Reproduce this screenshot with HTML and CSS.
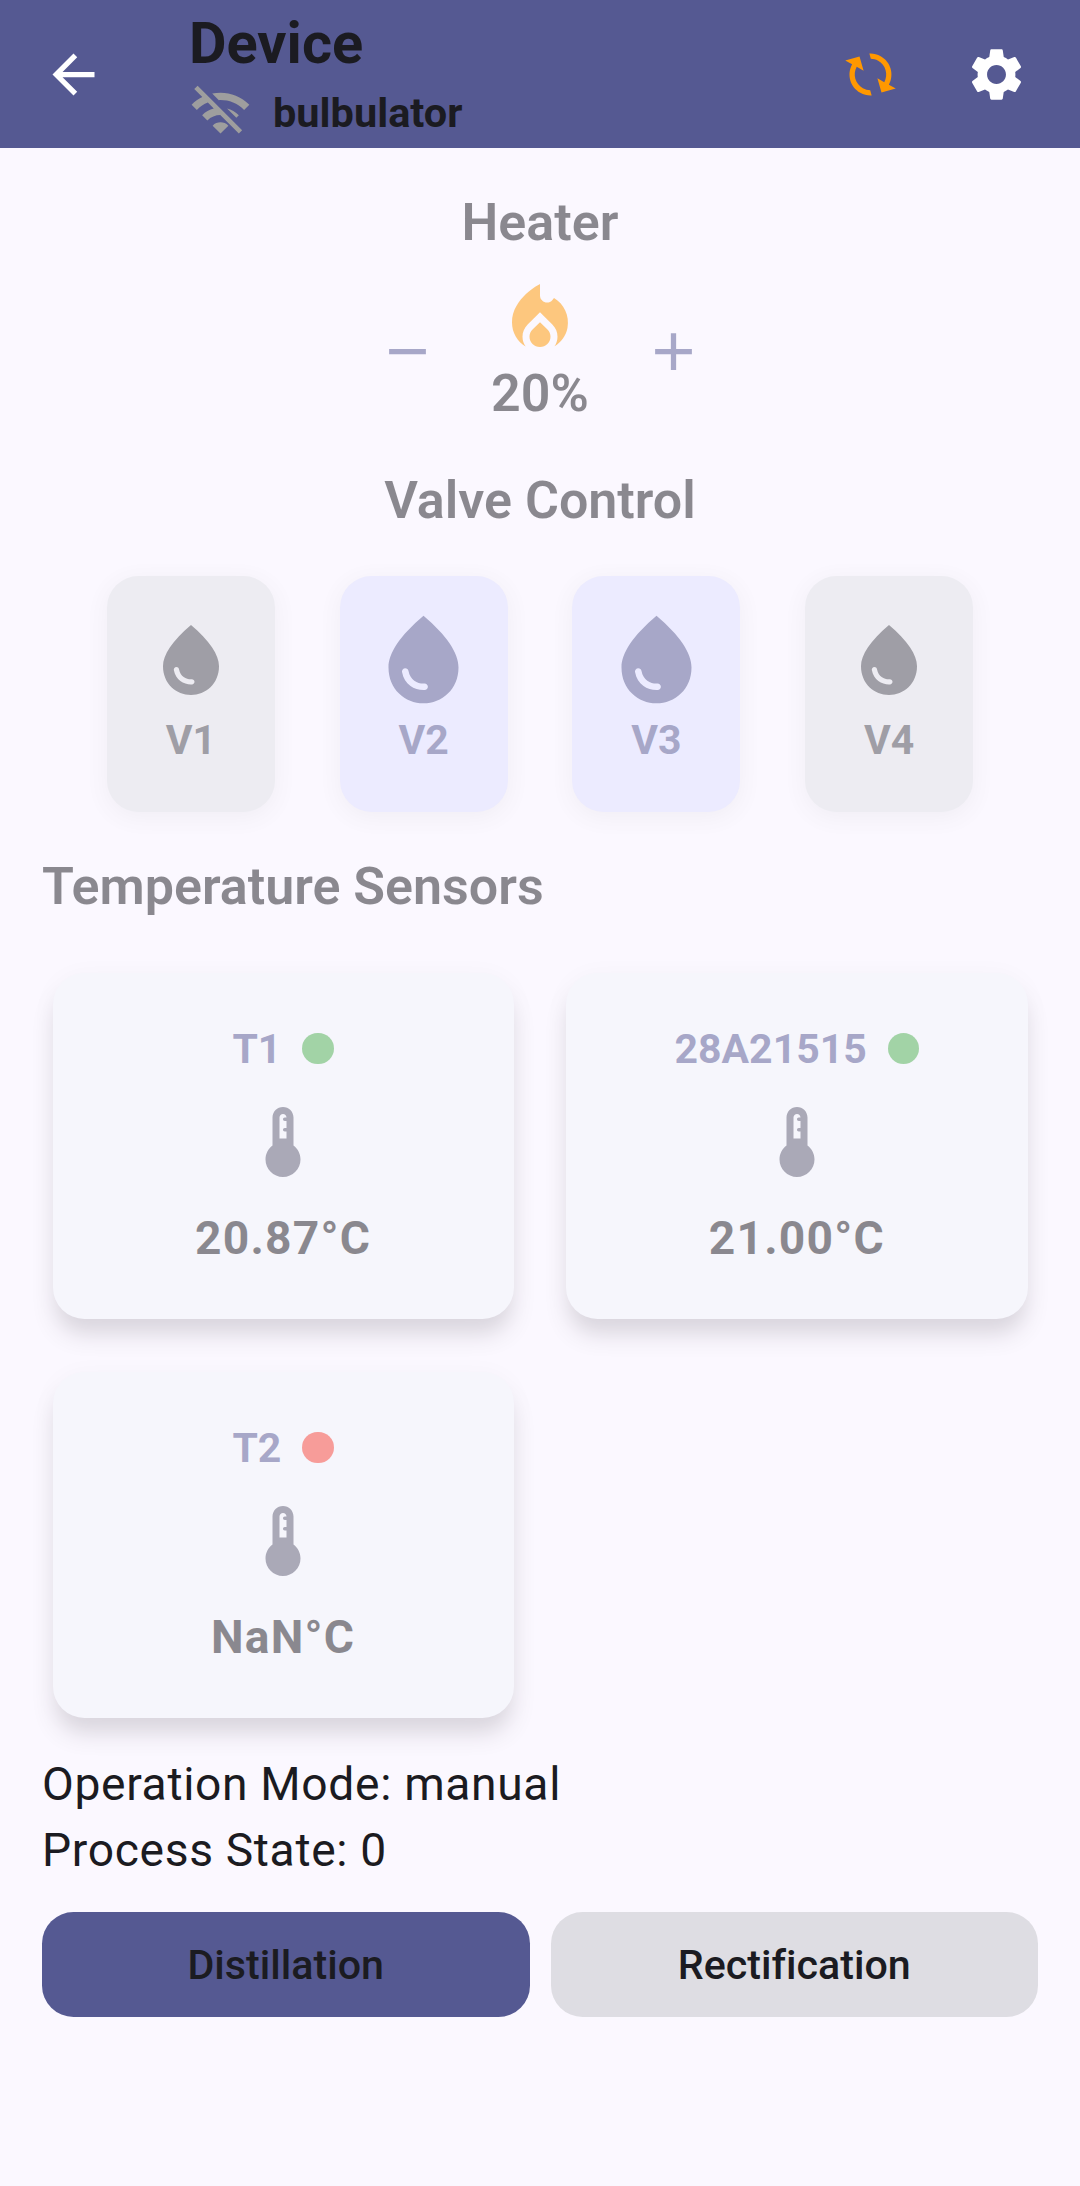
FILE: index.html
```html
<!DOCTYPE html>
<html lang="en">
<head>
<meta charset="utf-8">
<title>Device</title>
<link rel="stylesheet" href="styles.css">
</head>
<body>
<svg class="sprite" aria-hidden="true">
  <symbol id="drop" viewBox="0 0 24 24"><path d="M12 2c-5.33 4.55-8 8.48-8 11.8 0 4.98 3.8 8.2 8 8.2s8-3.22 8-8.2c0-3.32-2.67-7.25-8-11.8zM7.83 14c.37 0 .67.26.74.62.41 2.22 2.28 2.98 3.64 2.87.43-.02.79.32.79.75 0 .4-.32.73-.72.75-2.13.13-4.62-1.09-5.19-4.12-.08-.45.28-.87.74-.87z"/></symbol>
  <symbol id="thermometer" viewBox="0 0 24 24"><path d="M15 13V5c0-1.66-1.34-3-3-3S9 3.34 9 5v8c-1.21.91-2 2.37-2 4 0 2.76 2.24 5 5 5s5-2.24 5-5c0-1.63-.79-3.09-2-4zm-4-2V5c0-.55.45-1 1-1s1 .45 1 1h-.5c-.28 0-.5.22-.5.5s.22.5.5.5h.5v2h-.5c-.28 0-.5.22-.5.5s.22.5.5.5h.5v2h-2z"/></symbol>
</svg>

<header class="app-bar">
  <button class="icon-button" aria-label="Back">
    <svg class="icon" viewBox="0 0 24 24"><path d="M20 11H7.83l5.59-5.59L12 4l-8 8 8 8 1.41-1.41L7.83 13H20v-2z"/></svg>
  </button>
  <div class="heading">
    <h1 class="title">Device</h1>
    <div class="connection">
      <svg class="icon icon-offline" viewBox="0 0 24 24"><path d="M22.99 9C19.15 5.16 13.8 3.76 8.84 4.78l2.52 2.52c3.47-.17 6.99 1.05 9.63 3.7l2-2zm-4 4c-1.29-1.29-2.84-2.13-4.49-2.56l3.53 3.53.96-.97zM2 3.05L5.07 6.1C3.6 6.82 2.22 7.78 1 9l1.99 2c1.24-1.24 2.67-2.16 4.2-2.77l2.24 2.24C7.81 10.89 6.27 11.73 5 13v.01L6.99 15c1.36-1.36 3.14-2.04 4.92-2.06L18.98 20l1.27-1.26L3.29 1.79 2 3.05zM9 17l3 3 3-3c-1.65-1.66-4.34-1.66-6 0z"/></svg>
      <span class="name">bulbulator</span>
    </div>
  </div>
  <div class="actions">
    <button class="icon-button" aria-label="Sync">
      <svg class="icon icon-sync" viewBox="0 0 24 24"><path transform="rotate(119 12 12) translate(24 0) scale(-1 1)" d="M12 4V1L8 5l4 4V6c3.31 0 6 2.69 6 6 0 1.01-.25 1.97-.7 2.8l1.46 1.46C19.54 15.03 20 13.57 20 12c0-4.42-3.58-8-8-8zm0 14c-3.31 0-6-2.69-6-6 0-1.01.25-1.97.7-2.8L5.24 7.74C4.46 8.97 4 10.43 4 12c0 4.42 3.58 8 8 8v3l4-4-4-4v3z"/></svg>
    </button>
    <button class="icon-button" aria-label="Settings">
      <svg class="icon" viewBox="0 0 24 24"><path d="M19.14 12.94c.04-.3.06-.61.06-.94 0-.32-.02-.64-.07-.94l2.03-1.58c.18-.14.23-.41.12-.61l-1.92-3.32c-.12-.22-.37-.29-.59-.22l-2.39.96c-.5-.38-1.03-.7-1.62-.94L14.4 2.81c-.04-.24-.24-.41-.48-.41h-3.84c-.24 0-.43.17-.47.41L9.25 5.35c-.59.24-1.13.57-1.62.94l-2.39-.96c-.22-.08-.47 0-.59.22L2.74 8.87c-.12.21-.08.47.12.61l2.03 1.58c-.05.3-.09.63-.09.94s.02.64.07.94l-2.03 1.58c-.18.14-.23.41-.12.61l1.92 3.32c.12.22.37.29.59.22l2.39-.96c.5.38 1.03.7 1.62.94l.36 2.54c.05.24.24.41.48.41h3.84c.24 0 .44-.17.47-.41l.36-2.54c.59-.24 1.13-.56 1.62-.94l2.39.96c.22.08.47 0 .59-.22l1.92-3.32c.12-.22.07-.47-.12-.61l-2.01-1.58zM12 15.6c-1.98 0-3.6-1.62-3.6-3.6s1.62-3.6 3.6-3.6 3.6 1.62 3.6 3.6-1.62 3.6-3.6 3.6z"/></svg>
    </button>
  </div>
</header>

<main class="content">
  <div class="controls">
    <section class="heater">
      <h2 class="section-title">Heater</h2>
      <div class="heater-row">
        <button class="icon-button" aria-label="Decrease">
          <svg class="icon" viewBox="0 0 24 24"><path d="M5 11h14v2H5z"/></svg>
        </button>
        <div class="heater-level">
          <svg class="icon icon-large icon-flame" viewBox="0 0 24 24"><path d="M16 6l-.44.55C14.38 8.02 12 7.19 12 5.3V2S4 6 4 13c0 2.92 1.56 5.47 3.89 6.86-.56-.79-.89-1.76-.89-2.8 0-1.32.52-2.56 1.47-3.5L12 10.1l3.53 3.47c.95.93 1.47 2.17 1.47 3.5 0 1.02-.31 1.96-.85 2.75 1.89-1.15 3.29-3.06 3.71-5.3.66-3.55-1.07-6.9-3.86-8.52zM12 12.9l-2.13 2.09C9.31 15.55 9 16.28 9 17.06 9 18.68 10.35 20 12 20s3-1.32 3-2.94c0-.78-.31-1.52-.87-2.07L12 12.9z"/></svg>
          <span class="heater-value">20%</span>
        </div>
        <button class="icon-button" aria-label="Increase">
          <svg class="icon" viewBox="0 0 24 24"><path d="M11 5h2v6h6v2h-6v6h-2v-6H5v-2h6z"/></svg>
        </button>
      </div>
    </section>

    <section class="valves">
      <h2 class="section-title">Valve Control</h2>
      <div class="valve-row">
        <button class="valve"><span class="valve-icon"><svg class="icon icon-large"><use href="#drop"/></svg></span><span class="valve-label">V1</span></button>
        <button class="valve valve-open"><span class="valve-icon"><svg class="icon icon-xlarge"><use href="#drop"/></svg></span><span class="valve-label">V2</span></button>
        <button class="valve valve-open"><span class="valve-icon"><svg class="icon icon-xlarge"><use href="#drop"/></svg></span><span class="valve-label">V3</span></button>
        <button class="valve"><span class="valve-icon"><svg class="icon icon-large"><use href="#drop"/></svg></span><span class="valve-label">V4</span></button>
      </div>
    </section>

    <section class="sensors">
      <h2 class="section-title sensors-title">Temperature Sensors</h2>
      <div class="sensor-grid">
        <article class="sensor">
          <div class="sensor-head"><span class="sensor-name">T1</span><span class="status status-ok"></span></div>
          <svg class="icon icon-large"><use href="#thermometer"/></svg>
          <span class="sensor-value">20.87°C</span>
        </article>
        <article class="sensor">
          <div class="sensor-head"><span class="sensor-name">28A21515</span><span class="status status-ok"></span></div>
          <svg class="icon icon-large"><use href="#thermometer"/></svg>
          <span class="sensor-value">21.00°C</span>
        </article>
        <article class="sensor">
          <div class="sensor-head"><span class="sensor-name">T2</span><span class="status status-error"></span></div>
          <svg class="icon icon-large"><use href="#thermometer"/></svg>
          <span class="sensor-value">NaN°C</span>
        </article>
      </div>
    </section>
  </div>

  <section class="state">
    <p class="state-line">Operation Mode: manual</p>
    <p class="state-line">Process State: 0</p>
  </section>

  <div class="modes">
    <button class="mode mode-active">Distillation</button>
    <button class="mode">Rectification</button>
  </div>
</main>
</body>
</html>
```
FILE: styles.css
```css
* {
  box-sizing: border-box;
}

body {
  margin: 0;
  min-height: 2186px;
  background: #fbf8ff;
  color: #1b1b21;
  font-family: Roboto, sans-serif;
}

h1,
h2,
p {
  margin: 0;
}

button {
  padding: 0;
  border: 0;
  background: none;
  color: inherit;
  font: inherit;
}

.sprite {
  display: none;
}

.icon {
  display: block;
  flex: none;
  width: 63px;
  height: 63px;
  fill: currentColor;
}

.icon-large {
  width: 84px;
  height: 84px;
}

.icon-xlarge {
  width: 105px;
  height: 105px;
}

.icon-button {
  display: flex;
  align-items: center;
  justify-content: center;
  width: 126px;
  height: 126px;
}

/* App bar */

.app-bar {
  display: flex;
  align-items: center;
  height: 148px;
  padding: 1px 21px 0 10.5px;
  background: #555992;
}

.app-bar .icon-button {
  color: #fff;
}

.heading {
  flex: 1;
  padding-left: 52.5px;
}

.title {
  font-size: 57.75px;
  font-weight: 700;
  line-height: 76px;
}

.connection {
  display: flex;
  align-items: center;
  gap: 21px;
  height: 63px;
}

.icon-offline {
  color: #9e9e9e;
}

.name {
  font-size: 41.5px;
  font-weight: 700;
}

.actions {
  display: flex;
}

.app-bar .icon-sync {
  color: #ff9800;
}

/* Content */

.content {
  padding: 42px 42px 0;
}

.controls {
  opacity: 0.5;
}

.section-title {
  font-size: 52px;
  font-weight: 600;
  line-height: 65px;
  text-align: center;
}

.heater-row {
  display: flex;
  align-items: center;
  justify-content: center;
  gap: 21px;
  margin-top: 22px;
  color: #555992;
}

.heater-level {
  display: flex;
  flex-direction: column;
  align-items: center;
  width: 98px;
}

.icon-flame {
  color: #ff9800;
}

.heater-value {
  color: #1b1b21;
  font-size: 52px;
  font-weight: 600;
  line-height: 65px;
}

/* Valves */

.valves {
  margin-top: 42px;
}

.valve-row {
  display: flex;
  justify-content: space-evenly;
  margin-top: 42.5px;
}

.valve {
  display: flex;
  flex-direction: column;
  align-items: center;
  width: 168px;
  height: 236.5px;
  padding-top: 31.5px;
  border-radius: 31.5px;
  background: #e0e2e6;
  color: #46464f;
  box-shadow: 0 5px 21px rgba(0, 0, 0, 0.08);
}

.valve-open {
  background: #dedfff;
  color: #555992;
}

.valve-icon {
  display: flex;
  align-items: center;
  height: 105px;
}

.valve-label {
  margin-top: 4px;
  font-size: 41px;
  font-weight: 700;
  line-height: 49px;
}

/* Sensors */

.sensors {
  margin-top: 41.5px;
}

.sensors-title {
  text-align: left;
}

.sensor-grid {
  display: grid;
  grid-template-columns: 1fr 1fr;
  gap: 52.5px;
  margin-top: 54px;
  padding: 0 10.5px;
}

.sensor {
  display: flex;
  flex-direction: column;
  align-items: center;
  height: 346.5px;
  padding-top: 44.5px;
  border-radius: 31.5px;
  background: #f2f5fb;
  color: #5c5d72;
  box-shadow: 0 18px 21px -3px rgba(27, 15, 30, 0.27), 0 4px 26px rgba(27, 15, 30, 0.04);
}

.sensor-head {
  display: flex;
  align-items: center;
  gap: 21px;
  height: 63px;
  margin-bottom: 19.5px;
}

.sensor-name {
  color: #555992;
  font-size: 41px;
  font-weight: 700;
}

.status {
  width: 31.5px;
  height: 31.5px;
  border-radius: 50%;
}

.status-ok {
  background: #4caf50;
}

.status-error {
  background: #f44336;
}

.sensor-value {
  margin-top: 23px;
  color: #1b1b21;
  font-size: 46.2px;
  font-weight: 700;
  line-height: 63px;
  letter-spacing: 1.2px;
}

/* State and mode buttons */

.state {
  margin-top: 32.5px;
}

.state-line {
  font-size: 46.2px;
  line-height: 66px;
  letter-spacing: 0.66px;
}

.modes {
  display: grid;
  grid-template-columns: 1fr 1fr;
  gap: 21px;
  margin-top: 29.5px;
}

.mode {
  height: 105px;
  border-radius: 31.5px;
  background: #dedde3;
  font-size: 41.2px;
  font-weight: 500;
  font-variant-ligatures: none;
}

.mode-active {
  background: #555992;
}
```
